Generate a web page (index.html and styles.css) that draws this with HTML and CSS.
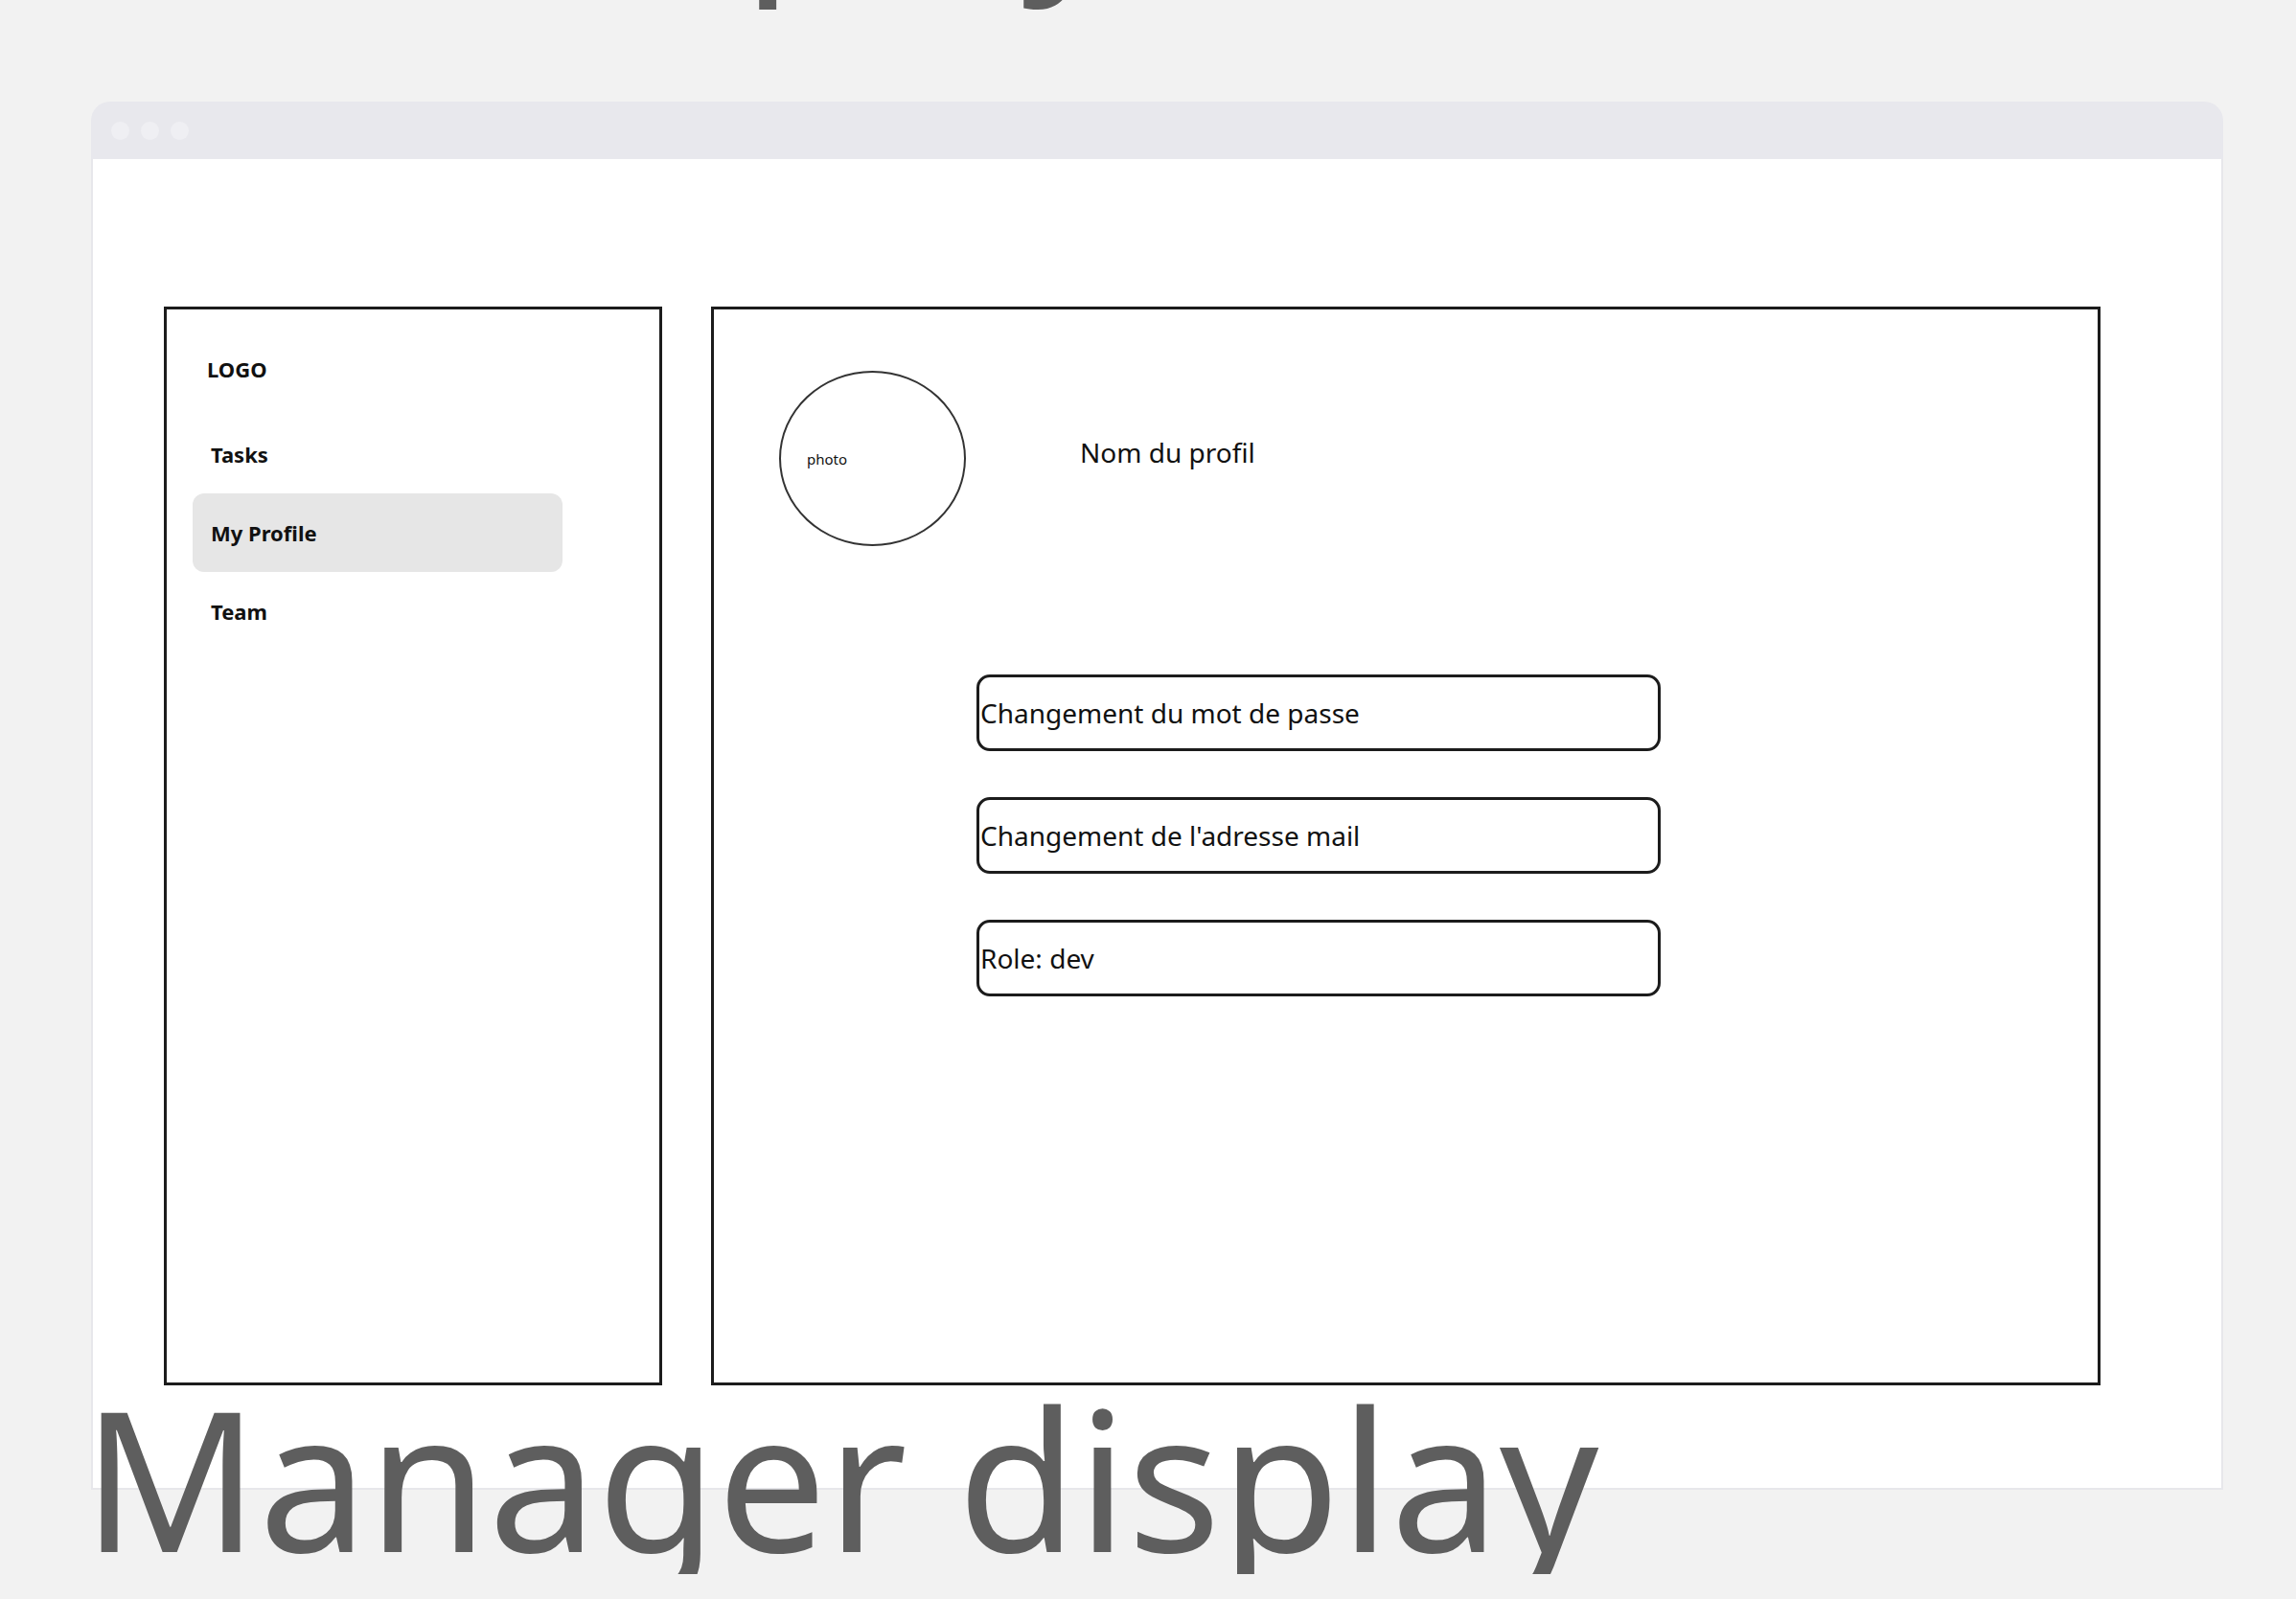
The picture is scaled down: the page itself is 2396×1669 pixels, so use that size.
FILE: index.html
```html
<!DOCTYPE html>
<html lang="fr">
<head>
    <meta charset="UTF-8">
    <meta name="viewport" content="width=device-width, initial-scale=1.0">
    <title>Displays</title>
    <link rel="stylesheet" href="styles.css">
</head>
<body>
    <h1 class="board-title board-title-top">Dev display</h1>

    <div class="window">
        <div class="window-bar">
            <span class="dot"></span>
            <span class="dot"></span>
            <span class="dot"></span>
        </div>
        <div class="window-body">
            <aside class="sidebar">
                <div class="logo">LOGO</div>
                <nav class="nav">
                    <a class="nav-item">Tasks</a>
                    <a class="nav-item active">My Profile</a>
                    <a class="nav-item">Team</a>
                </nav>
            </aside>
            <main class="profile">
                <div class="profile-head">
                    <div class="photo">photo</div>
                    <div class="profile-name">Nom du profil</div>
                </div>
                <div class="fields">
                    <div class="field">Changement du mot de passe</div>
                    <div class="field">Changement de l'adresse mail</div>
                    <div class="field">Role: dev</div>
                </div>
            </main>
        </div>
    </div>

    <h1 class="board-title board-title-bottom">Manager display</h1>
</body>
</html>
```

FILE: styles.css
```css
*{
    box-sizing: border-box;
}
body{
    font-family: "Noto Sans", "Open Sans", sans-serif;
    background: #f2f2f2;
    margin: 0;
    color: #111;
}
.board-title{
    font-size: 203px;
    line-height: 203px;
    font-weight: 400;
    color: #5e5e5e;
    margin: 0;
    padding-left: 86px;
    white-space: nowrap;
}
.board-title-top{
    margin-top: -219px;
}
.board-title-bottom{
    margin-top: -115px;
}

/* window frame */
.window{
    width: 2225px;
    margin: 122px 0 0 95px;
}
.window-bar{
    height: 60px;
    background: #e8e8ed;
    border-radius: 20px 20px 0 0;
    display: flex;
    align-items: center;
    gap: 12px;
    padding-left: 21px;
}
.dot{
    width: 19px;
    height: 19px;
    border-radius: 50%;
    background: #efeff3;
}
.window-body{
    background: #fff;
    border: 2px solid #e7e7eb;
    border-top: none;
    display: flex;
    gap: 51px;
    padding: 154px 0 107px 74px;
}

/* sidebar */
.sidebar{
    width: 520px;
    height: 1126px;
    border: 3px solid #1c1c1c;
    padding: 47px 0 0 27px;
}
.logo{
    font-size: 22px;
    font-weight: 700;
    line-height: 30px;
    margin: 0 0 33px 15px;
}
.nav{
    display: flex;
    flex-direction: column;
}
.nav-item{
    width: 386px;
    height: 82px;
    display: flex;
    align-items: center;
    padding-left: 19px;
    border-radius: 12px;
    font-size: 22px;
    font-weight: 700;
    color: #111;
    cursor: pointer;
}
.nav-item.active{
    background: #e6e6e6;
}

/* profile */
.profile{
    width: 1450px;
    height: 1126px;
    border: 3px solid #1c1c1c;
    padding: 64px 0 0 68px;
}
.profile-head{
    display: flex;
    align-items: flex-start;
}
.photo{
    width: 195px;
    height: 183px;
    border: 2px solid #333;
    border-radius: 50%;
    display: flex;
    align-items: center;
    padding-left: 27px;
    font-size: 15px;
}
.profile-name{
    margin: 66px 0 0 119px;
    font-size: 28px;
    line-height: 38px;
}
.fields{
    display: flex;
    flex-direction: column;
    gap: 48px;
    margin: 134px 0 0 206px;
}
.field{
    width: 714px;
    height: 80px;
    border: 3px solid #1c1c1c;
    border-radius: 14px;
    display: flex;
    align-items: center;
    padding-left: 1px;
    font-size: 28px;
}
```
